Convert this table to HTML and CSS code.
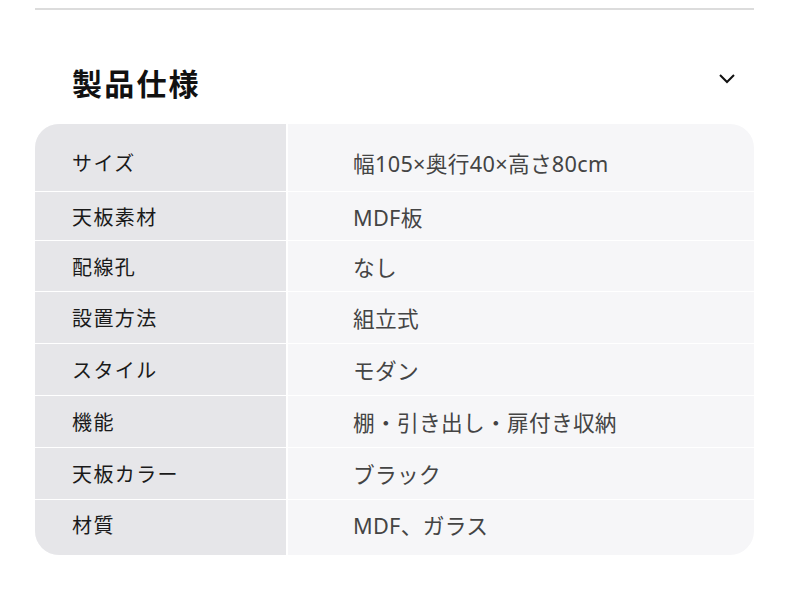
FILE: index.html
```html
<!DOCTYPE html>
<html lang="ja">
<head>
<meta charset="utf-8">
<link rel="stylesheet" href="styles.css">
</head>
<body>
<div class="page">
  <div class="rule"></div>
  <div class="head">
    <h2 class="title">製品仕様</h2>
    <svg class="chev" width="18" height="12" viewBox="0 0 18 12"><path d="M2 2 L9 9 L16 2" fill="none" stroke="#111" stroke-width="2"/></svg>
  </div>
  <div class="table">
    <div class="row first"><div class="k">サイズ</div><div class="v">幅105×奥行40×高さ80cm</div></div>
    <div class="row r2"><div class="k">天板素材</div><div class="v">MDF板</div></div>
    <div class="row r3"><div class="k">配線孔</div><div class="v">なし</div></div>
    <div class="row"><div class="k">設置方法</div><div class="v">組立式</div></div>
    <div class="row"><div class="k">スタイル</div><div class="v">モダン</div></div>
    <div class="row"><div class="k">機能</div><div class="v">棚・引き出し・扉付き収納</div></div>
    <div class="row"><div class="k">天板カラー</div><div class="v">ブラック</div></div>
    <div class="row last"><div class="k">材質</div><div class="v">MDF、ガラス</div></div>
  </div>
</div>
</body>
</html>
```
FILE: styles.css
```css
* { box-sizing: border-box; }
body { margin: 0; background: #fff; font-family: "Noto Sans CJK JP", "Noto Sans", sans-serif; }
.page { padding: 8px 36px 0 35px; }
.rule { height: 2px; background: #dcdcdc; }
.head { position: relative; height: 114px; padding-left: 37px; padding-top: 52px; }
.title { margin: 0; font-size: 30px; line-height: 40px; font-weight: 700; letter-spacing: 2.2px; color: #111; }
.chev { position: absolute; right: 18px; top: 63px; }
.table { border-radius: 24px; overflow: hidden; background: #f6f6f8; display: flex; flex-direction: column; }
.row { display: grid; grid-template-columns: 253px 1fr; height: 52px; border-top: 1px solid #fff; }
.row.first { border-top: none; height: 67px; padding-top: 10px; }
.row.r2 { height: 49px; }
.row.r3 { height: 51px; }
.row.last { height: 56px; padding-bottom: 6px; }
.k { background: #e6e6e9; border-right: 2px solid #fff; display: flex; align-items: center; padding-left: 37px; font-size: 20px; letter-spacing: 1.4px; color: #1a1a1a; }
.v { display: flex; align-items: center; padding-left: 65px; font-family: "Noto Sans", "Noto Sans CJK JP", sans-serif; font-size: 21.7px; letter-spacing: 0.3px; color: #444; }
.row.first .k { margin-top: -10px; padding-top: 10px; }
.row.last .k { margin-bottom: -6px; padding-bottom: 6px; }
```
